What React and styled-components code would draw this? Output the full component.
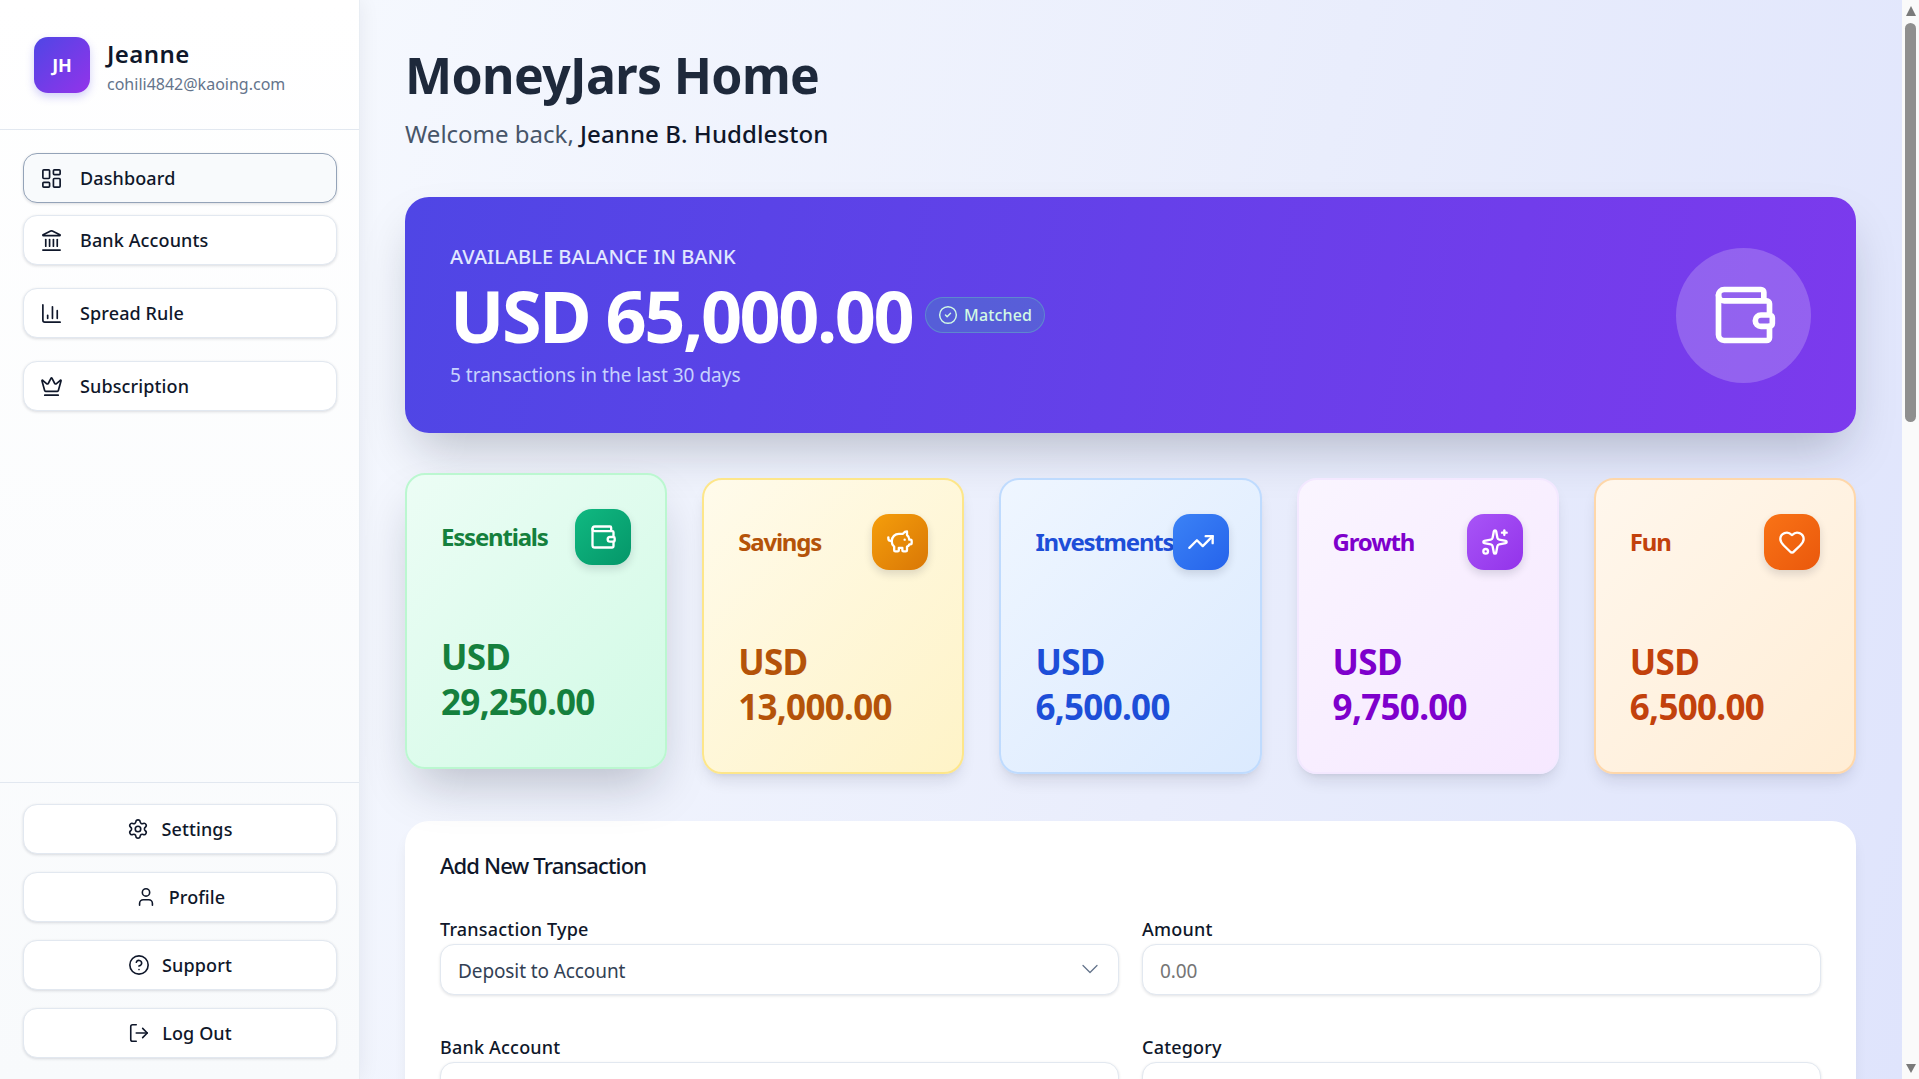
import React from "react";
import styled, { createGlobalStyle } from "styled-components";
import {
  LayoutDashboard, Landmark, ChartColumn, Crown, Settings, User, CircleHelp, LogOut,
  Wallet, CircleCheck, PiggyBank, TrendingUp, Sparkles, Heart, ChevronDown,
} from "lucide-react";

const Global = createGlobalStyle`
  * { box-sizing: border-box; }
  html, body { margin: 0; height: 100%; overflow: hidden; }
  body { font-family: "Noto Sans", "Open Sans", sans-serif; color: #0f172a; }
  button, input, select { font-family: inherit; }
`;

const Shell = styled.div`
  display: flex;
  height: 100vh;
  background: #fafafa;
`;

const Sidebar = styled.aside`
  position: relative;
  z-index: 1;
  flex: 0 0 360px;
  display: flex;
  flex-direction: column;
  background: linear-gradient(180deg, #ffffff 0%, #f8fafc 100%);
  border-right: 1px solid #e8edf3;
  box-shadow: 0 0 20px rgba(15, 23, 42, 0.07);
`;

const Profile = styled.header`
  height: 130px;
  display: flex;
  align-items: center;
  gap: 17px;
  padding: 0 34px;
  border-bottom: 1px solid #e2e8f0;
`;

const Avatar = styled.div`
  width: 56px;
  height: 56px;
  border-radius: 14px;
  display: flex;
  align-items: center;
  justify-content: center;
  color: #fff;
  font-size: 18px;
  font-weight: 700;
  background: linear-gradient(135deg, #4f46e5, #9333ea);
  box-shadow: 0 4px 8px rgba(79, 70, 229, 0.25);
`;

const ProfileText = styled.div`
  padding-top: 5px;
`;

const ProfileName = styled.div`
  font-size: 24px;
  line-height: 32px;
  font-weight: 600;
  letter-spacing: 0.45px;
  color: #0f172a;
`;

const ProfileMail = styled.div`
  margin-top: 2px;
  font-size: 16px;
  line-height: 24px;
  color: #64748b;
`;

const Nav = styled.nav`
  flex: 1;
  display: flex;
  flex-direction: column;
  gap: 23px;
  padding: 23px 22px 23px 23px;
`;

const NavGroup = styled.div`
  display: flex;
  flex-direction: column;
  gap: 12px;
`;

const NavItem = styled.button`
  height: 50px;
  width: 100%;
  display: flex;
  align-items: center;
  justify-content: ${(p) => (p.$center ? "center" : "flex-start")};
  gap: ${(p) => (p.$center ? "12px" : "17px")};
  padding: 0 16px;
  font-size: 18px;
  font-weight: 500;
  letter-spacing: 0.12px;
  color: #0f172a;
  background: ${(p) => (p.$active ? "#f8fafc" : "#ffffff")};
  border: 1px solid ${(p) => (p.$active ? "#94a3b8" : "#e2e8f0")};
  border-radius: 14px;
  box-shadow: 0 1px 3px rgba(15, 23, 42, 0.14);
`;

const Footer = styled.div`
  display: flex;
  flex-direction: column;
  gap: 18px;
  padding: 21px 22px 21px 23px;
  border-top: 1px solid #e2e8f0;
`;

const Main = styled.main`
  flex: 1;
  min-width: 0;
  overflow: hidden;
  background: linear-gradient(105deg, #f5f8fe 0%, #e9edfc 55%, #dfe4fc 100%);
`;

const Page = styled.div`
  padding: 45px 46px 60px 45px;
`;

const Rail = styled.div`
  flex: 0 0 17px;
  display: flex;
  flex-direction: column;
  align-items: center;
  padding: 6px 0;
  background: #fafafa;
`;

const RailUp = styled.div`
  width: 0;
  height: 0;
  border-left: 5.5px solid transparent;
  border-right: 5.5px solid transparent;
  border-bottom: 10px solid #7a7a7a;
`;

const RailThumb = styled.div`
  width: 11px;
  height: 399px;
  margin-top: 7px;
  border-radius: 6px;
  background: #8f8f8f;
`;

const RailDown = styled.div`
  width: 0;
  height: 0;
  margin-top: auto;
  border-left: 5.5px solid transparent;
  border-right: 5.5px solid transparent;
  border-top: 9px solid #7a7a7a;
`;

const Title = styled.h1`
  margin: 0;
  font-size: 50px;
  line-height: 60px;
  font-weight: 700;
  letter-spacing: -0.65px;
  color: #1e293b;
`;

const Welcome = styled.p`
  margin: 13px 0 47px;
  font-size: 24px;
  line-height: 32px;
  color: #475569;
`;

const WelcomeName = styled.span`
  font-weight: 500;
  letter-spacing: 0.1px;
  color: #0f172a;
`;

const Hero = styled.section`
  height: 236px;
  display: flex;
  align-items: center;
  justify-content: space-between;
  padding: 0 45px;
  border-radius: 24px;
  color: #fff;
  background: linear-gradient(100deg, #4f46e5 0%, #7c3aed 100%);
  box-shadow: 0 25px 50px -12px rgba(15, 23, 42, 0.25);
`;

const HeroLabel = styled.div`
  margin-top: 1px;
  font-size: 20px;
  line-height: 28px;
  font-weight: 500;
  letter-spacing: 0.05px;
  color: #e0e7ff;
`;

const HeroRow = styled.div`
  display: flex;
  align-items: center;
  gap: 13px;
`;

const HeroAmount = styled.div`
  font-size: 72px;
  line-height: 88px;
  font-weight: 700;
  letter-spacing: -2.5px;
`;

const Badge = styled.span`
  display: inline-flex;
  align-items: center;
  gap: 6px;
  height: 36px;
  padding: 0 12px;
  border-radius: 18px;
  font-size: 16px;
  font-weight: 500;
  letter-spacing: 0.15px;
  color: #d1fae5;
  background: rgba(52, 211, 153, 0.2);
  border: 1px solid rgba(110, 231, 183, 0.3);
`;

const HeroSub = styled.div`
  font-size: 19px;
  line-height: 28px;
  margin-top: 2px;
  color: #c7d2fe;
`;

const HeroCircle = styled.div`
  width: 135px;
  height: 135px;
  border-radius: 50%;
  display: flex;
  align-items: center;
  justify-content: center;
  background: rgba(255, 255, 255, 0.2);
`;

const Jars = styled.div`
  display: grid;
  grid-template-columns: repeat(5, minmax(0, 1fr));
  gap: 35px;
  margin: 45px 0 47px;
`;

const Jar = styled.article`
  height: 296px;
  padding: 34px 34px 0;
  border: 2px solid ${(p) => p.$border};
  border-radius: 20px;
  color: ${(p) => p.$ink};
  background: linear-gradient(135deg, ${(p) => p.$from}, ${(p) => p.$to});
  transform: translateY(${(p) => (p.$lifted ? "-5px" : "0")});
  box-shadow: ${(p) =>
    p.$lifted
      ? "0 25px 50px -12px rgba(15, 23, 42, 0.25)"
      : "0 10px 15px -3px rgba(15, 23, 42, 0.1), 0 4px 6px -4px rgba(15, 23, 42, 0.1)"};
`;

const JarHead = styled.div`
  display: flex;
  align-items: center;
  justify-content: space-between;
`;

const JarName = styled.h3`
  margin: 0;
  font-size: 24px;
  line-height: 32px;
  font-weight: 700;
  letter-spacing: -1.2px;
  white-space: nowrap;
`;

const JarTile = styled.div`
  flex: 0 0 56px;
  height: 56px;
  border-radius: 17px;
  display: flex;
  align-items: center;
  justify-content: center;
  color: #fff;
  background: linear-gradient(135deg, ${(p) => p.$from}, ${(p) => p.$to});
  box-shadow: 0 4px 8px rgba(15, 23, 42, 0.14);
`;

const JarAmount = styled.div`
  margin-top: 69px;
  font-size: 35px;
  line-height: 45px;
  font-weight: 700;
  letter-spacing: -0.7px;
`;

const Panel = styled.section`
  padding: 29px 35px 40px;
  border-radius: 24px;
  background: #fff;
  box-shadow: 0 10px 15px -3px rgba(15, 23, 42, 0.08);
`;

const PanelTitle = styled.h2`
  margin: 0 0 37px;
  font-size: 22px;
  line-height: 30px;
  font-weight: 500;
  letter-spacing: -0.85px;
  color: #0f172a;
`;

const FormGrid = styled.div`
  display: grid;
  grid-template-columns: 1fr 1fr;
  column-gap: 23px;
  row-gap: 40px;
`;

const Field = styled.label`
  display: block;
`;

const FieldLabel = styled.div`
  margin-bottom: 3px;
  font-size: 18px;
  line-height: 24px;
  font-weight: 500;
  letter-spacing: 0.2px;
  color: #0f172a;
`;

const SelectWrap = styled.div`
  position: relative;
`;

const Chevron = styled.span`
  position: absolute;
  right: 15px;
  top: 11px;
  display: flex;
  color: #64748b;
`;

const controlCss = `
  width: 100%;
  height: 51px;
  padding: 2px 17px 0;
  font-size: 19px;
  letter-spacing: -0.1px;
  color: #334155;
  background: #fff;
  border: 1px solid #e2e8f0;
  border-radius: 14px;
  box-shadow: 0 1px 3px rgba(15, 23, 42, 0.12);
  outline: none;
`;

const Select = styled.select`
  ${controlCss}
  appearance: none;
`;

const Input = styled.input`
  ${controlCss}
  &::placeholder { color: #757575; }
`;

const jars = [
  { name: "Essentials", value: "29,250.00", Icon: Wallet, lifted: true, ink: "#15803d", border: "#bbf7d0", from: "#ecfdf5", to: "#d1fae5", a: "#10b981", b: "#059669" },
  { name: "Savings", value: "13,000.00", Icon: PiggyBank, ink: "#b45309", border: "#fde68a", from: "#fffbeb", to: "#fef3c7", a: "#f59e0b", b: "#d97706" },
  { name: "Investments", value: "6,500.00", Icon: TrendingUp, ink: "#1d4ed8", border: "#bfdbfe", from: "#eff6ff", to: "#dbeafe", a: "#3b82f6", b: "#2563eb" },
  { name: "Growth", value: "9,750.00", Icon: Sparkles, ink: "#7e00cc", border: "#f3e8ff", from: "#faf5ff", to: "#f6e8ff", a: "#a855f7", b: "#9333ea" },
  { name: "Fun", value: "6,500.00", Icon: Heart, ink: "#c2410c", border: "#fed7aa", from: "#fff7ed", to: "#ffedd5", a: "#f97316", b: "#ea580c" },
];

export default function App() {
  return (
    <Shell>
      <Global />
      <Sidebar>
        <Profile>
          <Avatar>JH</Avatar>
          <ProfileText>
            <ProfileName>Jeanne</ProfileName>
            <ProfileMail>cohili4842@kaoing.com</ProfileMail>
          </ProfileText>
        </Profile>
        <Nav>
          <NavGroup>
            <NavItem $active><LayoutDashboard size={23} strokeWidth={1.75} />Dashboard</NavItem>
            <NavItem><Landmark size={23} strokeWidth={1.75} />Bank Accounts</NavItem>
          </NavGroup>
          <NavItem><ChartColumn size={23} strokeWidth={1.75} />Spread Rule</NavItem>
          <NavItem><Crown size={23} strokeWidth={1.75} />Subscription</NavItem>
        </Nav>
        <Footer>
          <NavItem $center><Settings size={22} strokeWidth={1.75} />Settings</NavItem>
          <NavItem $center><User size={22} strokeWidth={1.75} />Profile</NavItem>
          <NavItem $center><CircleHelp size={22} strokeWidth={1.75} />Support</NavItem>
          <NavItem $center><LogOut size={22} strokeWidth={1.75} />Log Out</NavItem>
        </Footer>
      </Sidebar>
      <Main>
        <Page>
          <Title>MoneyJars Home</Title>
          <Welcome>Welcome back, <WelcomeName>Jeanne B. Huddleston</WelcomeName></Welcome>
          <Hero>
            <div>
              <HeroLabel>AVAILABLE BALANCE IN BANK</HeroLabel>
              <HeroRow>
                <HeroAmount>USD 65,000.00</HeroAmount>
                <Badge><CircleCheck size={20} strokeWidth={1.75} />Matched</Badge>
              </HeroRow>
              <HeroSub>5 transactions in the last 30 days</HeroSub>
            </div>
            <HeroCircle><Wallet size={68} strokeWidth={2} color="#fff" /></HeroCircle>
          </Hero>
          <Jars>
            {jars.map(({ name, value, Icon, lifted, ink, border, from, to, a, b }) => (
              <Jar key={name} $lifted={lifted} $ink={ink} $border={border} $from={from} $to={to}>
                <JarHead>
                  <JarName>{name}</JarName>
                  <JarTile $from={a} $to={b}><Icon size={28} strokeWidth={2} /></JarTile>
                </JarHead>
                <JarAmount>USD {value}</JarAmount>
              </Jar>
            ))}
          </Jars>
          <Panel>
            <PanelTitle>Add New Transaction</PanelTitle>
            <FormGrid>
              <Field>
                <FieldLabel>Transaction Type</FieldLabel>
                <SelectWrap>
                  <Select defaultValue="deposit"><option value="deposit">Deposit to Account</option></Select>
                  <Chevron><ChevronDown size={28} strokeWidth={1.1} /></Chevron>
                </SelectWrap>
              </Field>
              <Field>
                <FieldLabel>Amount</FieldLabel>
                <Input placeholder="0.00" />
              </Field>
              <Field>
                <FieldLabel>Bank Account</FieldLabel>
                <SelectWrap>
                  <Select defaultValue="main"><option value="main">Main Account</option></Select>
                </SelectWrap>
              </Field>
              <Field>
                <FieldLabel>Category</FieldLabel>
                <SelectWrap>
                  <Select defaultValue="essentials"><option value="essentials">Essentials</option></Select>
                </SelectWrap>
              </Field>
            </FormGrid>
          </Panel>
        </Page>
      </Main>
      <Rail>
        <RailUp />
        <RailThumb />
        <RailDown />
      </Rail>
    </Shell>
  );
}
